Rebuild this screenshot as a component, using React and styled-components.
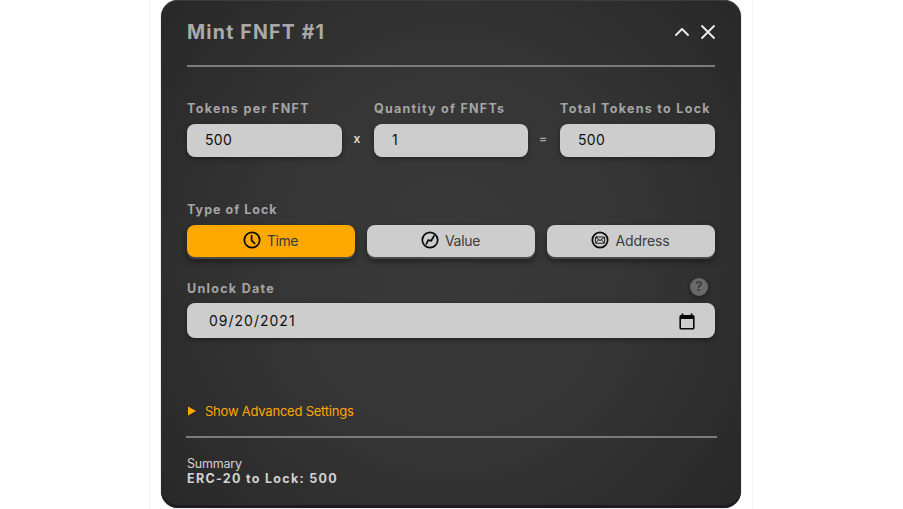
import React from "react";
import styled, { createGlobalStyle } from "styled-components";

const GlobalStyle = createGlobalStyle`
  * { box-sizing: border-box; }
  body { margin: 0; background: #fff; overflow: hidden; font-family: Inter, "Liberation Sans", sans-serif; }
  button, input { font: inherit; }
`;

const Frame = styled.main`
  width: 604px;
  height: 509px;
  margin-left: 149px;
  border: solid #f4f4f4;
  border-width: 0 1px;
  padding: 0 11px;
`;

const Card = styled.section`
  width: 580px;
  height: 508px;
  padding: 0 26px;
  border-radius: 17px;
  background: radial-gradient(ellipse 62% 75% at 50% 50%, #393939 0%, #363636 45%, #292929 100%);
  box-shadow: inset 0 -3px #1e1c20, inset 0 1px #3c3c3c, 0 0 1px #555;
  display: flex;
  flex-direction: column;
`;

const Header = styled.header`
  height: 65px;
  display: flex;
  align-items: center;
  justify-content: space-between;
`;

const Title = styled.h1`
  margin: 0;
  padding-bottom: 2px;
  font-size: 19.5px;
  font-weight: 700;
  line-height: 24px;
  letter-spacing: ${(p) => p.$track}px;
  white-space: nowrap;
  color: #aaa;
`;

const Actions = styled.div`
  display: flex;
  align-items: center;
  gap: 12px;
  padding-bottom: 1px;
`;

const IconButton = styled.button`
  display: flex;
  padding: 0;
  border: 0;
  background: none;
  color: #eee;
`;

const Divider = styled.hr`
  width: ${(p) => (p.$wide ? 531 : 528)}px;
  height: 2px;
  flex: none;
  margin: ${(p) => (p.$wide ? "0 0 0 -1px" : "0")};
  border: 0;
  background: #7b7b7b;
`;

const Label = styled.label`
  display: block;
  height: 16px;
  font-size: 12.5px;
  font-weight: 700;
  line-height: 16px;
  letter-spacing: ${(p) => p.$track}px;
  white-space: nowrap;
  color: #a5a5a5;
`;

const AmountRow = styled.div`
  display: grid;
  grid-template-columns: 155px 32px 154px 32px 155px;
  margin-top: 34px;
`;

const Field = styled.div`
  display: flex;
  flex-direction: column;
  gap: 7px;
  min-width: 0;
`;

const Input = styled.input`
  width: 100%;
  height: 33px;
  padding: 0 18px 2px;
  border: 0;
  border-radius: 8px;
  background: #cdcdcd;
  box-shadow: 0 2px 5px rgba(0, 0, 0, 0.35);
  color: #111;
  font-size: 14px;
  letter-spacing: 0.3px;
`;

const Operator = styled.span`
  align-self: end;
  height: 33px;
  padding-right: 2px;
  line-height: 29px;
  text-align: center;
  font-size: 12px;
  font-weight: 600;
  color: ${(p) => p.$color};
`;

const LockSection = styled.div`
  display: flex;
  flex-direction: column;
  gap: 7px;
  margin-top: 45px;
`;

const LockRow = styled.div`
  display: grid;
  grid-template-columns: repeat(3, 168px);
  gap: 12px;
`;

const LockButton = styled.button`
  height: 32px;
  display: flex;
  align-items: center;
  justify-content: center;
  gap: 6px;
  padding: 0 1px 2px 0;
  border: 0;
  border-radius: 8px;
  background: ${(p) => (p.$active ? "#ffa800" : "#cdcdcd")};
  box-shadow: 0 2px 1px #4c4c4c, 0 4px 6px rgba(0, 0, 0, 0.5);
  color: #3b3b3b;
  font-size: 14px;
  letter-spacing: ${(p) => p.$track}px;
  svg { color: #080808; }
`;

const DateHead = styled.div`
  display: flex;
  justify-content: space-between;
  align-items: flex-end;
  height: 20px;
  margin-top: 20px;
  padding-right: 7px;
`;

const Help = styled.span`
  width: 18px;
  height: 18px;
  margin-bottom: 1px;
  border-radius: 50%;
  background: #696969;
  box-shadow: 0 2px 4px rgba(0, 0, 0, 0.35);
  color: #363636;
  font-size: 12.5px;
  font-weight: 600;
  line-height: 18px;
  text-align: center;
`;

const DateField = styled.div`
  height: 35px;
  margin-top: 6px;
  padding: 0 20px 0 22px;
  display: flex;
  align-items: center;
  justify-content: space-between;
  border-radius: 8px;
  background: #cdcdcd;
  box-shadow: 0 2px 5px rgba(0, 0, 0, 0.35);
  color: #111;
  font-size: 14px;
  letter-spacing: ${(p) => p.$track}px;
  svg { margin-top: 3px; }
`;

const Advanced = styled.button`
  display: flex;
  align-items: center;
  align-self: flex-start;
  gap: 9px;
  height: 20px;
  margin: 63px 0 15px;
  padding: 0 0 0 1px;
  border: 0;
  background: none;
  color: #ffa800;
  font-size: 13px;
  white-space: nowrap;
  letter-spacing: ${(p) => p.$track}px;
`;

const Summary = styled.div`
  margin-top: 19px;
  color: #d2d2d2;
  font-size: 12.5px;
  line-height: 14px;
  white-space: nowrap;
`;

const SummaryTitle = styled.div`
  letter-spacing: ${(p) => p.$track}px;
`;

const SummaryValue = styled.div`
  margin-top: 1px;
  font-size: 12.5px;
  font-weight: 700;
  letter-spacing: ${(p) => p.$track}px;
`;

const Svg = ({ w, h, children, sw = 2 }) => (
  <svg width={w} height={h} viewBox={`0 0 ${w} ${h}`} fill="none" stroke="currentColor" strokeWidth={sw} strokeLinecap="round" strokeLinejoin="round">
    {children}
  </svg>
);

const ClockIcon = () => (
  <Svg w={18} h={18} sw={1.7}>
    <circle cx="9" cy="9" r="7.7" />
    <path d="M8.6 4.5v4.8l3 3.2" />
  </Svg>
);

const ValueIcon = () => (
  <Svg w={18} h={18} sw={1.7}>
    <circle cx="9" cy="9" r="7.7" />
    <path d="M5.4 12.9 7.2 9.2l3 .5L13 5" strokeLinejoin="miter" />
  </Svg>
);

const MailIcon = () => (
  <Svg w={18} h={18} sw={1.7}>
    <circle cx="9" cy="9" r="7.7" />
    <g strokeWidth="0.9">
      <rect x="4.4" y="6" width="9.2" height="6.3" rx="1" />
      <path d="M4.8 6.4 9 9.6l4.2-3.200M4.800 12l2.700-3M13.200 12l-2.700-3" />
    </g>
  </Svg>
);

const CalendarIcon = () => (
  <svg width="16" height="18" viewBox="0 0 16 18">
    <path
      fill="#080808"
      fillRule="evenodd"
      d="M2.500 .5h1.800v1.500h7.400V.5h1.800v1.500h.5a1.600 1.600 0 0 1 1.600 1.600v11.300a1.600 1.600 0 0 1-1.600 1.600H2a1.600 1.600 0 0 1-1.600-1.600V3.600a1.600 1.600 0 0 1 1.600-1.600h.5zM2 6v8.900h12V6z"
    />
  </svg>
);

export default function App() {
  return (
    <>
      <GlobalStyle />
      <Frame>
        <Card>
          <Header>
            <Title $track={1.2}>Mint FNFT #1</Title>
            <Actions>
              <IconButton aria-label="Collapse">
                <Svg w={14} h={14} sw={1.8}><path d="M1 10 7 4l6 6" /></Svg>
              </IconButton>
              <IconButton aria-label="Close">
                <Svg w={14} h={14} sw={1.8}><path d="m1 1 12 12M13 1 1 13" /></Svg>
              </IconButton>
            </Actions>
          </Header>
          <Divider />
          <AmountRow>
            <Field>
              <Label $track={1.32}>Tokens per FNFT</Label>
              <Input defaultValue="500" />
            </Field>
            <Operator $color="#ddd">x</Operator>
            <Field>
              <Label $track={1.25}>Quantity of FNFTs</Label>
              <Input defaultValue="1" />
            </Field>
            <Operator $color="#aaa">=</Operator>
            <Field>
              <Label $track={1.3}>Total Tokens to Lock</Label>
              <Input defaultValue="500" />
            </Field>
          </AmountRow>
          <LockSection>
            <Label $track={1.02}>Type of Lock</Label>
            <LockRow>
              <LockButton $active $track={-0.5}><ClockIcon />Time</LockButton>
              <LockButton $track={-0.3}><ValueIcon />Value</LockButton>
              <LockButton $track={-0.1}><MailIcon />Address</LockButton>
            </LockRow>
          </LockSection>
          <DateHead>
            <Label $track={1.3}>Unlock Date</Label>
            <Help>?</Help>
          </DateHead>
          <DateField $track={1}>
            <span>09/20/2021</span>
            <CalendarIcon />
          </DateField>
          <Advanced $track={-0.22}>
            <svg width="8" height="10" viewBox="0 0 8 10"><path d="M0 .5v9L8 5z" fill="currentColor" /></svg>
            Show Advanced Settings
          </Advanced>
          <Divider $wide />
          <Summary>
            <SummaryTitle $track={-0.2}>Summary</SummaryTitle>
            <SummaryValue $track={1.3}>ERC-20 to Lock: 500</SummaryValue>
          </Summary>
        </Card>
      </Frame>
    </>
  );
}
